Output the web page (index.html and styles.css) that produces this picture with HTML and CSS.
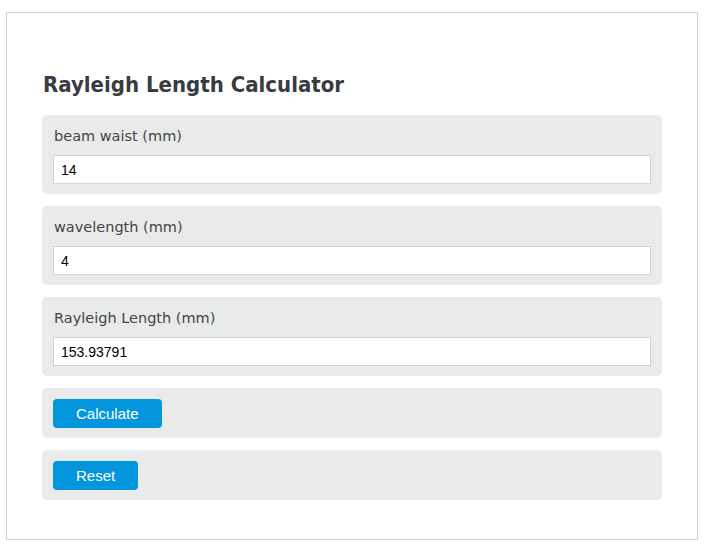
FILE: index.html
```html
<!DOCTYPE html>
<html>
<head>
<meta charset="utf-8">
<link rel="stylesheet" href="styles.css">
</head>
<body>
<div class="card">
  <h1 class="title">Rayleigh Length Calculator</h1>
  <div class="rows">
    <div class="panel">
      <label class="label">beam waist (mm)</label>
      <input class="field" type="text" value="14">
    </div>
    <div class="panel">
      <label class="label">wavelength (mm)</label>
      <input class="field" type="text" value="4">
    </div>
    <div class="panel">
      <label class="label">Rayleigh Length (mm)</label>
      <input class="field" type="text" value="153.93791">
    </div>
    <div class="panel panel-btn">
      <button class="btn" type="button">Calculate</button>
    </div>
    <div class="panel panel-btn">
      <button class="btn" type="button">Reset</button>
    </div>
  </div>
</div>
</body>
</html>
```
FILE: styles.css
```css
html, body {
  margin: 0;
  padding: 0;
  background: #ffffff;
}
.card {
  box-sizing: border-box;
  margin: 12px 0 0 6px;
  width: 692px;
  height: 528px;
  border: 1px solid #d0d0d0;
  padding: 58px 35px 0 35px;
}
.title {
  margin: 0 0 16px 1px;
  font-family: "DejaVu Sans Condensed", "DejaVu Sans", sans-serif;
  font-weight: bold;
  font-size: 22px;
  line-height: 28px;
  color: #383b3f;
}
.rows {
  display: flex;
  flex-direction: column;
  gap: 12px;
}
.panel {
  background: #e9eaea;
  border-radius: 5px;
  padding: 10px 10px 10px 11px;
  display: flex;
  flex-direction: column;
}
.label {
  font-family: "DejaVu Sans", sans-serif;
  font-size: 14.5px;
  line-height: 20px;
  color: #454545;
  margin: 1px 0 9px 1px;
}
.field {
  box-sizing: border-box;
  height: 29px;
  width: 598px;
  margin: 0;
  border: 1px solid #d3d3d3;
  background: #fff;
  padding: 0 7px;
  font-family: "Liberation Sans", Arial, sans-serif;
  font-size: 14px;
  color: #000;
  outline: none;
}
.panel-btn {
  padding: 11px 10px 10px 11px;
  align-items: flex-start;
}
.btn {
  box-sizing: border-box;
  height: 29px;
  padding: 0 23px;
  border: none;
  border-radius: 4px;
  background: #0396dc;
  color: #fff;
  font-family: "Liberation Sans", Arial, sans-serif;
  font-size: 15px;
  cursor: pointer;
}
```
